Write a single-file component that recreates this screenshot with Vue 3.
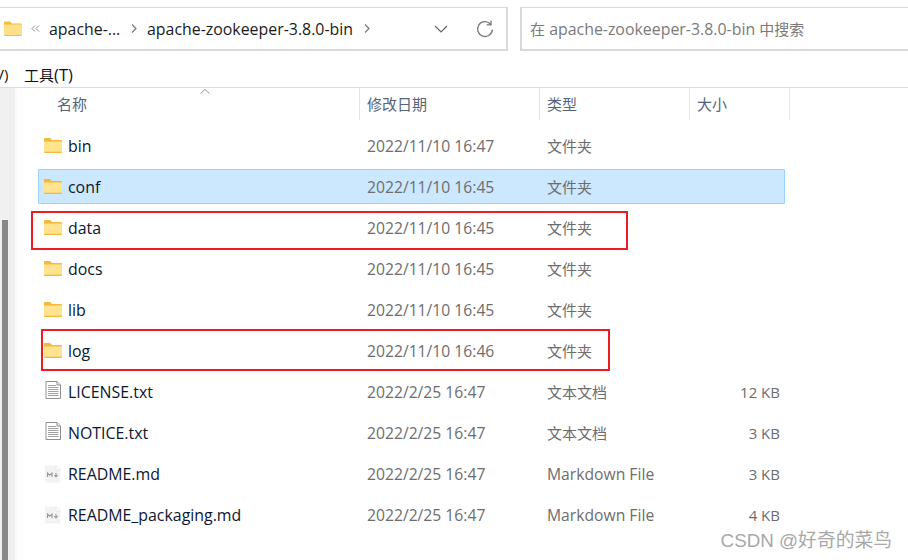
<script setup>
const rows = [
  { name: 'bin', date: '2022/11/10 16:47', type: '文件夹', size: '', icon: 'folder' },
  { name: 'conf', date: '2022/11/10 16:45', type: '文件夹', size: '', icon: 'folder', selected: true },
  { name: 'data', date: '2022/11/10 16:45', type: '文件夹', size: '', icon: 'folder' },
  { name: 'docs', date: '2022/11/10 16:45', type: '文件夹', size: '', icon: 'folder' },
  { name: 'lib', date: '2022/11/10 16:45', type: '文件夹', size: '', icon: 'folder' },
  { name: 'log', date: '2022/11/10 16:46', type: '文件夹', size: '', icon: 'folder' },
  { name: 'LICENSE.txt', date: '2022/2/25 16:47', type: '文本文档', size: '12 KB', icon: 'txt' },
  { name: 'NOTICE.txt', date: '2022/2/25 16:47', type: '文本文档', size: '3 KB', icon: 'txt' },
  { name: 'README.md', date: '2022/2/25 16:47', type: 'Markdown File', size: '3 KB', icon: 'md', latin: true },
  { name: 'README_packaging.md', date: '2022/2/25 16:47', type: 'Markdown File', size: '4 KB', icon: 'md', latin: true },
]
</script>

<template>
  <div class="window">
    <div class="toolbar">
      <div class="address">
        <svg class="crumb-folder" viewBox="0 0 18 15" width="18" height="15">
          <path d="M0 1.5 A1 1 0 0 1 1 .5 H6 L8 2.5 H17 A1 1 0 0 1 18 3.5 V14 A1 1 0 0 1 17 15 H1 A1 1 0 0 1 0 14 Z" fill="#f6bd3b" />
          <rect x="0" y="3.5" width="18" height="10.5" fill="#ffe08a" />
        </svg>
        <svg class="dbl" viewBox="0 0 9 7" width="9" height="7"><path d="M4 .5 L1 3.5 L4 6.5 M8 .5 L5 3.5 L8 6.5" fill="none" stroke="#8a8a8a" stroke-width="1" /></svg>
        <span class="crumb first">apache-...</span>
        <svg class="chev c1" viewBox="0 0 6 9" width="6" height="9"><path d="M1 .5 L5 4.5 L1 8.5" fill="none" stroke="#777" stroke-width="1.2" /></svg>
        <span class="crumb">apache-zookeeper-3.8.0-bin</span>
        <svg class="chev c2" viewBox="0 0 6 9" width="6" height="9"><path d="M1 .5 L5 4.5 L1 8.5" fill="none" stroke="#777" stroke-width="1.2" /></svg>
        <span class="spacer"></span>
        <svg class="down" viewBox="0 0 14 8" width="14" height="8"><path d="M1 1 L7 7 L13 1" fill="none" stroke="#666" stroke-width="1.2" /></svg>
        <svg class="refresh" viewBox="0 0 18 18" width="18" height="18"><path d="M14.6 4.2 A7.4 7.4 0 1 0 16.4 9.5" fill="none" stroke="#777" stroke-width="1.3" /><path d="M15 .5 V4.8 H10.7" fill="none" stroke="#777" stroke-width="1.3" /></svg>
      </div>
      <div class="search"><span class="cjk">在</span> apache-zookeeper-3.8.0-bin <span class="cjk">中搜索</span></div>
    </div>

    <div class="menu"><span class="cut">V)</span><span class="tool">工具<span class="paren">(T)</span></span></div>

    <div class="body">
      <aside class="side"><div class="thumb"></div></aside>
      <main class="list">
        <div class="head">
          <svg class="sort" viewBox="0 0 10 5" width="10" height="5"><path d="M.5 4.5 L5 .5 L9.5 4.5" fill="none" stroke="#999" stroke-width="1" /></svg>
          <div class="hc c-name">名称</div>
          <div class="hc c-date">修改日期</div>
          <div class="hc c-type">类型</div>
          <div class="hc c-size">大小</div>
        </div>

        <div class="rows">
          <div v-for="r in rows" :key="r.name" class="row" :class="{ selected: r.selected }">
            <div class="c-name cell-name">
              <svg v-if="r.icon === 'folder'" class="ic" viewBox="0 0 18 15" width="18" height="15">
                <path d="M0 1 A1 1 0 0 1 1 0 H6 L8 2 H17 A1 1 0 0 1 18 3 V14 A1 1 0 0 1 17 15 H1 A1 1 0 0 1 0 14 Z" fill="#f5b83a" />
                <rect x="0" y="3.5" width="18" height="10.2" fill="#ffe38f" />
              </svg>
              <svg v-else-if="r.icon === 'txt'" class="ic txt" viewBox="0 0 18 18" width="18" height="18">
                <path d="M2 .5 H13 L16.5 4 V17.5 H2 Z" fill="#fff" stroke="#8f8f8f" />
                <path d="M13 .5 V4 H16.5" fill="#eee" stroke="#8f8f8f" />
                <path d="M4 4.5 H12 M4 6.5 H14.5 M4 8.5 H14.5 M4 10.5 H14.5 M4 12.5 H14.5 M4 14.5 H14.5" stroke="#a0a0a0" />
              </svg>
              <svg v-else class="ic" viewBox="0 0 18 18" width="18" height="18">
                <path d="M1 .5 H12 L16.5 5 V16.5 A1 1 0 0 1 15.5 17.5 H2 A1 1 0 0 1 1 16.5 Z" fill="#f3f3f3" />
                <path d="M12 .5 V5 H16.5 Z" fill="#fff" stroke="#e0e0e0" stroke-width=".6" />
                <path d="M3.5 12 V8 L5.7 10.2 L8 8 V12" fill="none" stroke="#999" stroke-width="1.1" />
                <path d="M12 8 V11.5 M10.2 10 L12 12 L13.8 10" fill="none" stroke="#999" stroke-width="1.1" />
              </svg>
              <span class="name">{{ r.name }}</span>
            </div>
            <div class="c-date muted latin">{{ r.date }}</div>
            <div class="c-type muted" :class="{ latin: r.latin }">{{ r.type }}</div>
            <div class="c-size muted size">{{ r.size }}</div>
          </div>
        </div>
      </main>
    </div>

    <div class="mark mark-data"></div>
    <div class="mark mark-log"></div>
    <div class="watermark">CSDN @好奇的菜鸟</div>
  </div>
</template>

<style scoped>
.window {
  position: relative;
  width: 908px;
  height: 560px;
  overflow: hidden;
  background: #fff;
  font-family: "Open Sans", "Noto Sans CJK SC", sans-serif;
  font-size: 15px;
  color: #1a1a1a;
}
.toolbar {
  display: flex;
  gap: 12px;
  height: 44px;
  padding-top: 7px;
  margin-left: -1px;
}
.address {
  box-sizing: border-box;
  width: 509px;
  height: 44px;
  border: 1px solid #d9d9d9;
  border-width: 1px 2px 2px 1px;
  display: flex;
  align-items: center;
  padding-left: 4px;
}
.crumb-folder { margin-right: 9px; flex: none; }
.dbl { margin-right: 11px; flex: none; }
.crumb { white-space: nowrap; font-size: 15.9px; }
.first { width: 83px; margin-left: -2px; }
.chev { flex: none; }
.c1 { margin-left: -1px; margin-right: 10px; }
.c2 { margin-left: 11px; }
.spacer { flex: 1; }
.down { margin-right: 28px; flex: none; }
.refresh { margin-right: 12px; flex: none; }
.search {
  box-sizing: border-box;
  flex: 1;
  height: 44px;
  border: 1px solid #d9d9d9;
  border-width: 1px 0 2px 2px;
  padding-left: 8px;
  line-height: 42px;
  color: #7a7a7a;
  font-size: 15.9px;
}
.cjk { font-size: 15px; }
.menu {
  height: 37px;
  border-bottom: 1px solid #dcdcdc;
  box-sizing: border-box;
  display: flex;
  align-items: center;
  padding-top: 10px;
  color: #111;
  font-size: 15px;
}
.paren { font-size: 16.5px; }
.cut { width: 24px; margin-left: -5px; flex: none; margin-right: 5px; }
.body {
  display: flex;
  height: 472px;
}
.side {
  width: 15px;
  background: #f0f0f0;
  border-right: 2px solid #fafafa;
  position: relative;
  flex: none;
}
.thumb {
  position: absolute;
  left: 2px;
  top: 132px;
  width: 6px;
  bottom: 0;
  background: #888;
}
.list { flex: 1; min-width: 0; }
.head {
  display: flex;
  height: 32px;
  position: relative;
}
.sort { position: absolute; left: 183px; top: 1px; }
.hc {
  box-sizing: border-box;
  color: #566478;
  font-size: 15px;
  line-height: 32px;
  border-right: 1px solid #e4e4e4;
}
.c-name { width: 343px; flex: none; padding-left: 40px; }
.c-date { width: 180px; flex: none; padding-left: 7px; }
.c-type { width: 150px; flex: none; padding-left: 7px; }
.c-size { width: 100px; flex: none; padding-left: 7px; }
.rows { padding-top: 8px; padding-left: 21px; }
.row {
  display: flex;
  align-items: center;
  height: 35px;
  margin-bottom: 6px;
  width: 747px;
  box-sizing: border-box;
  border: 1px solid transparent;
  border-radius: 1px;
}
.row .c-name { width: 321px; padding-left: 5px; box-sizing: border-box; }
.row .c-date { width: 180px; box-sizing: border-box; }
.row .c-type { width: 150px; box-sizing: border-box; }
.row .c-size { width: 90px; box-sizing: border-box; padding: 0; }
.selected {
  background: #cce8ff;
  border-color: #99d1ff;
}
.cell-name { display: flex; align-items: center; gap: 6px; }
.ic { flex: none; width: 18px; }
.txt { margin-top: -3px; }
.name { color: #0b1730; white-space: nowrap; font-size: 15.9px; }
.muted { color: #6d6d6d; white-space: nowrap; }
.latin { font-size: 15.7px; }
.size { text-align: right; }
.mark { position: absolute; box-sizing: border-box; border: 2px solid #ed1c24; }
.mark-data { left: 31px; top: 211px; width: 597px; height: 39px; }
.mark-log { left: 41px; top: 329px; width: 569px; height: 42px; }
.watermark {
  position: absolute;
  right: 16px;
  top: 530px;
  font-family: "Liberation Sans", "Noto Sans CJK SC", sans-serif;
  font-size: 18.8px;
  line-height: 22px;
  color: #a8a8a8;
  white-space: nowrap;
}
</style>
